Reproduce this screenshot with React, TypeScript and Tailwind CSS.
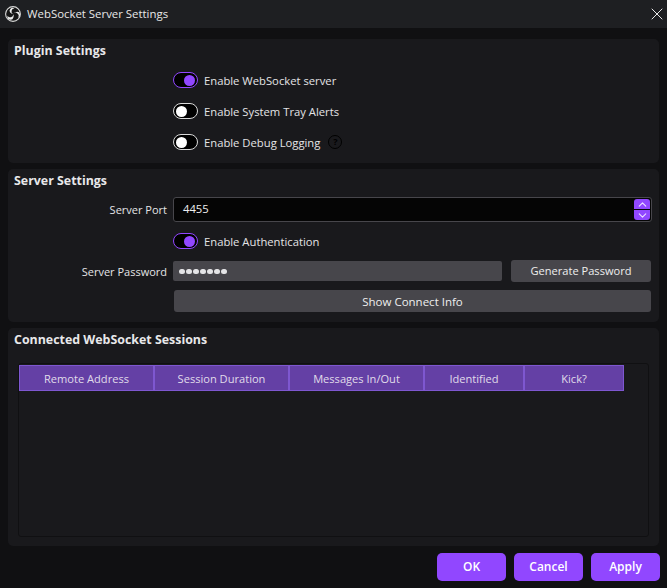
import { ChevronDown, ChevronUp, X } from "lucide-react";

const font = { fontFamily: '"Open Sans", "Noto Sans", sans-serif' };

function ObsLogo() {
  return (
    <svg width="16" height="16" viewBox="0 0 16 16" fill="none" className="shrink-0">
      <circle cx="8" cy="8" r="7.4" fill="#151515" stroke="#d8d8d8" strokeWidth="1.1" />
      <path d="M9.4 2.4A3 3 0 0 0 5.2 6.6 3.4 3.4 0 0 0 8 8 3 3 0 0 1 9.4 2.4Z" fill="#eeeeee" />
      <path d="M2.6 9.8A3 3 0 0 0 8.4 11.4 3.4 3.4 0 0 0 8.2 8.2 3 3 0 0 1 2.6 9.8Z" fill="#eeeeee" />
      <path d="M12.8 11.8A3 3 0 0 0 11.2 6 3.4 3.4 0 0 0 8.2 7.8 3 3 0 0 1 12.8 11.8Z" fill="#eeeeee" />
    </svg>
  );
}

function Toggle({ on, label, help }: { on?: boolean; label: string; help?: boolean }) {
  return (
    <div className="flex h-4 items-center">
      <span
        className={`flex h-4 w-[25px] shrink-0 items-center rounded-full border-[1.5px] bg-black px-[2px] ${
          on ? "justify-end border-[#9147ff]" : "justify-start border-[#d8d8d8]"
        }`}
      >
        <span className={`size-[11px] rounded-full ${on ? "bg-[#9147ff]" : "bg-white"}`} />
      </span>
      <span className="ml-[6px] translate-y-px text-[11.25px] text-[#e4e4e6]">{label}</span>
      {help && (
        <span className="ml-[8px] flex size-[14px] items-center justify-center rounded-full border-[1.5px] border-black text-[9px] font-bold text-black">
          ?
        </span>
      )}
    </div>
  );
}

function PanelTitle({ children }: { children: React.ReactNode }) {
  return <h2 className="h-[22px] translate-y-px pl-[6px] text-[12.4px] leading-[22px] font-bold text-[#e8e8ea]">{children}</h2>;
}

function GrayButton({ children, className }: { children: React.ReactNode; className: string }) {
  return (
    <button className={`h-[22px] rounded-[3px] bg-[#47464b] pt-px text-[#eeeeee] ${className}`}>
      {children}
    </button>
  );
}

function PurpleButton({ children }: { children: React.ReactNode }) {
  return (
    <button className="h-[28px] w-[69px] rounded-[5px] bg-[#9147ff] text-[12px] font-semibold text-white">
      {children}
    </button>
  );
}

const columns = [
  { name: "Remote Address", width: "w-[135px]" },
  { name: "Session Duration", width: "w-[135px]" },
  { name: "Messages In/Out", width: "w-[135px]" },
  { name: "Identified", width: "w-[100px]" },
  { name: "Kick?", width: "w-[100px]" },
];

export default function App() {
  return (
    <div style={font} className="flex h-[588px] w-[667px] flex-col overflow-hidden bg-[#101012]">
      <header className="flex h-[28px] shrink-0 items-center bg-[#1e1f22] pl-[5px]">
        <ObsLogo />
        <span className="ml-[6px] text-[11.4px] text-[#e8e8e8]">WebSocket Server Settings</span>
        <X size={20} strokeWidth={1.2} className="ml-auto text-[#e8e8e8]" />
      </header>

      <main className="flex flex-col gap-[6px] px-[8px] pt-[11px]">
        <section className="h-[124px] rounded-[5px] bg-[#19191c]">
          <PanelTitle>Plugin Settings</PanelTitle>
          <div className="flex flex-col gap-[15px] pt-[11px] pl-[165px]">
            <Toggle on label="Enable WebSocket server" />
            <Toggle label="Enable System Tray Alerts" />
            <Toggle label="Enable Debug Logging" help />
          </div>
        </section>

        <section className="h-[153px] rounded-[5px] bg-[#19191c]">
          <PanelTitle>Server Settings</PanelTitle>
          <div className="grid grid-cols-[159px_1fr] items-center gap-x-[6px] pt-[6px]">
            <span className="translate-y-px text-right text-[11px] text-[#e4e4e6]">Server Port</span>
            <div className="mr-[7px] flex h-[25px] items-center justify-between rounded-[3px] border border-[#47464b] bg-[#050505] pr-[1px] pl-[9px] text-[11.25px] text-[#eeeeee]">
              4455
              <span className="flex w-[16px] flex-col gap-px">
                <span className="flex h-[10px] items-center justify-center rounded-t-[3px] bg-[#9147ff]">
                  <ChevronUp size={13} strokeWidth={2} className="text-[#ecdfff]" />
                </span>
                <span className="flex h-[10px] items-center justify-center rounded-b-[3px] bg-[#9147ff]">
                  <ChevronDown size={13} strokeWidth={2} className="text-[#ecdfff]" />
                </span>
              </span>
            </div>

            <div className="col-start-2 py-[11px]">
              <Toggle on label="Enable Authentication" />
            </div>

            <span className="translate-y-px text-right text-[11px] text-[#e4e4e6]">Server Password</span>
            <div className="mr-[8px] flex items-center gap-[9px]">
              <div className="flex h-[20px] w-[329px] items-center gap-[1.5px] rounded-[2px] bg-[#47464b] pt-px pl-[6px]">
                {[0, 1, 2, 3, 4, 5, 6].map((dot) => (
                  <span key={dot} className="size-[5.5px] rounded-full bg-[#e4e4e6]" />
                ))}
              </div>
              <GrayButton className="w-[140px] text-[11.1px]">Generate Password</GrayButton>
            </div>

            <div className="col-start-2 mr-[8px] flex pt-[8px] pl-px">
              <GrayButton className="w-full text-[11.5px]">Show Connect Info</GrayButton>
            </div>
          </div>
        </section>

        <section className="h-[218px] rounded-[5px] bg-[#19191c]">
          <PanelTitle>Connected WebSocket Sessions</PanelTitle>
          <div className="mx-[10px] mt-[13px] h-[174px] rounded-[3px] border border-[#101012] pt-[1px]">
            <div className="flex h-[26px] w-[605px]">
              {columns.map((col) => (
                <div
                  key={col.name}
                  className={`flex items-center justify-center border border-[#7e57d0] bg-[#6440a5] pt-[2px] text-[11.1px] text-[#e0dcea] ${col.width}`}
                >
                  {col.name}
                </div>
              ))}
            </div>
          </div>
        </section>
      </main>

      <footer className="flex justify-end gap-[8px] pt-[7px] pr-[7px]">
        <PurpleButton>OK</PurpleButton>
        <PurpleButton>Cancel</PurpleButton>
        <PurpleButton>Apply</PurpleButton>
      </footer>
    </div>
  );
}
